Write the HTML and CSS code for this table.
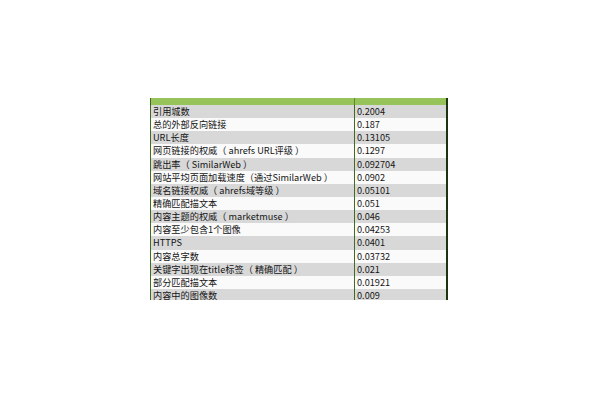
FILE: index.html
```html
<!DOCTYPE html>
<html>
<head>
<meta charset="utf-8">
<link rel="stylesheet" href="styles.css">
</head>
<body>
<div class="page">
  <div class="sheet">
    <div class="head"><div class="hc1"></div><div class="hc2"></div></div>
    <div class="row g"><div class="c1">引用城数</div><div class="c2">0.2004</div></div>
    <div class="row w"><div class="c1">总的外部反向链接</div><div class="c2">0.187</div></div>
    <div class="row g"><div class="c1">URL长度</div><div class="c2">0.13105</div></div>
    <div class="row w"><div class="c1">网页链接的权威（ ahrefs URL评级 ）</div><div class="c2">0.1297</div></div>
    <div class="row g"><div class="c1">跳出率（ SimilarWeb ）</div><div class="c2">0.092704</div></div>
    <div class="row w"><div class="c1">网站平均页面加载速度（通过SimilarWeb ）</div><div class="c2">0.0902</div></div>
    <div class="row g"><div class="c1">域名链接权威（ ahrefs域等级 ）</div><div class="c2">0.05101</div></div>
    <div class="row w"><div class="c1">精确匹配描文本</div><div class="c2">0.051</div></div>
    <div class="row g"><div class="c1">内容主题的权威（ marketmuse ）</div><div class="c2">0.046</div></div>
    <div class="row w"><div class="c1">内容至少包含1个图像</div><div class="c2">0.04253</div></div>
    <div class="row g"><div class="c1">HTTPS</div><div class="c2">0.0401</div></div>
    <div class="row w"><div class="c1">内容总字数</div><div class="c2">0.03732</div></div>
    <div class="row g"><div class="c1">关键字出现在title标签（ 精确匹配 ）</div><div class="c2">0.021</div></div>
    <div class="row w"><div class="c1">部分匹配描文本</div><div class="c2">0.01921</div></div>
    <div class="row g"><div class="c1">内容中的图像数</div><div class="c2">0.009</div></div>
  </div>
</div>
</body>
</html>
```
FILE: styles.css
```css
html, body {
  margin: 0;
  padding: 0;
  background: #ffffff;
}
.page {
  width: 600px;
  height: 400px;
  padding: 98px 0 0 150px;
  box-sizing: border-box;
}
.sheet {
  width: 298px;
  height: 202px;
  overflow: hidden;
  border-left: 1px solid #3f6b22;
  border-right: 2px solid #1e330f;
  box-sizing: border-box;
  font-family: "Noto Sans CJK SC", "Noto Sans", sans-serif;
  font-size: 9.2px;
  color: #151515;
}
.head {
  display: grid;
  grid-template-columns: 204px 1fr;
  height: 7px;
  background: #96c45a;
}
.hc1 {
  border-right: 1px solid #5a8a2a;
}
.row {
  display: grid;
  grid-template-columns: 204px 1fr;
  height: 13.15px;
  line-height: 13.15px;
}
.row.g { background: #d8d8d8; }
.row.w { background: #fafafa; }
.c1 {
  padding-left: 2px;
  border-right: 1px solid #3f6b22;
  white-space: nowrap;
  overflow: hidden;
}
.c2 {
  padding-left: 2px;
  white-space: nowrap;
}
```
